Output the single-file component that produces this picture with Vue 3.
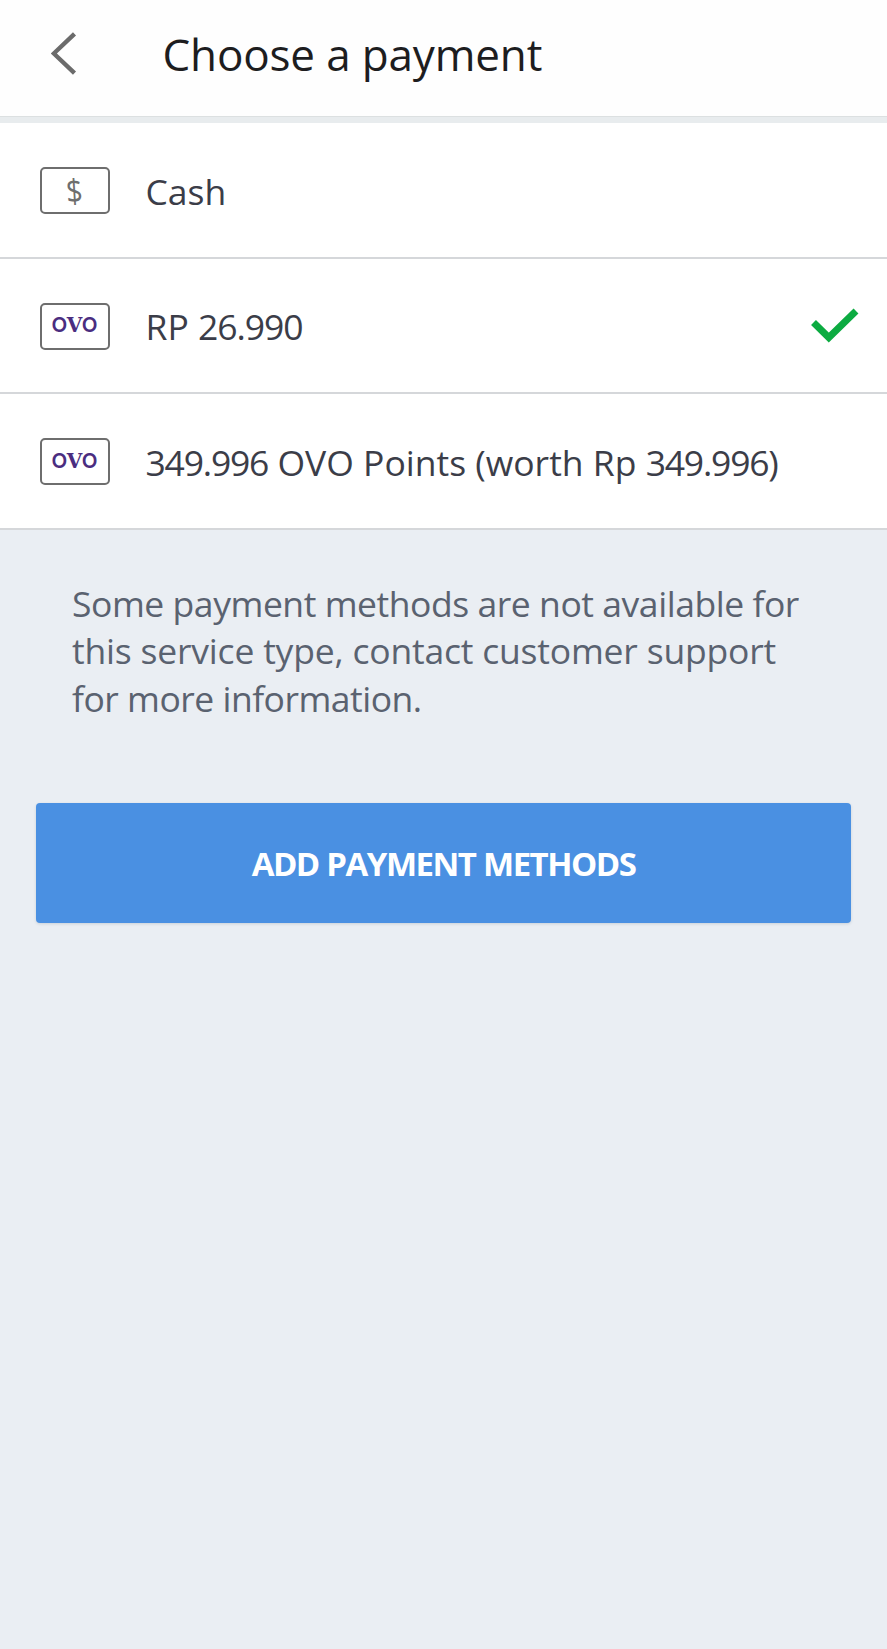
<script setup>
const methods = [
  { id: 'cash', kind: 'cash', parts: [{ text: 'Cash' }], selected: false },
  {
    id: 'balance',
    kind: 'ovo',
    parts: [{ text: 'RP ' }, { text: '26.990', number: true }],
    selected: true,
  },
  {
    id: 'points',
    kind: 'ovo',
    parts: [
      { text: '349.996', number: true },
      { text: ' OVO Points (worth Rp ' },
      { text: '349.996)', number: true },
    ],
    selected: false,
  },
]
const notice = [
  'Some payment methods are not available for',
  'this service type, contact customer support',
  'for more information.',
]
</script>

<template>
  <div class="screen">
    <header class="header">
      <svg class="back" width="26" height="44" viewBox="0 0 26 44" fill="none">
        <path d="M23.5 1.8 2.8 21.5 23.5 41.2" stroke="#6b6b6b" stroke-width="4.4" />
      </svg>
      <h1 class="title">Choose a payment</h1>
    </header>

    <ul class="methods">
      <li v-for="m in methods" :key="m.id" class="method">
        <span class="badge" :class="m.kind">
          <span v-if="m.kind === 'cash'" class="mark">$</span>
          <span v-else class="mark">O<span class="slab">V</span>O</span>
        </span>
        <span class="label" :class="m.id"><span
          v-for="(p, i) in m.parts" :key="i" :class="{ number: p.number }">{{ p.text }}</span></span>
        <svg v-if="m.selected" class="check" width="48" height="36" viewBox="0 0 48 36" fill="none">
          <path d="M2.5 14.5 17.8 29.5 45 3" stroke="#0cab41" stroke-width="7" />
        </svg>
      </li>
    </ul>

    <p class="notice">
      <span v-for="(line, i) in notice" :key="i" class="line" :class="'line-' + i">{{ line }}</span>
    </p>

    <button class="add" type="button">ADD PAYMENT METHODS</button>
  </div>
</template>

<style>
body {
  margin: 0;
  background: #eaeef3;
}
</style>

<style scoped>
.screen {
  min-height: 1649px;
  background: #eaeef3;
  font-family: 'Open Sans', 'Noto Sans', sans-serif;
  overflow: hidden;
}
.header {
  box-sizing: border-box;
  height: 123px;
  display: flex;
  align-items: flex-start;
  padding: 32px 0 0 51px;
  background: #fefefe;
  border-bottom: 6px solid #e8ecee;
  box-shadow: inset 0 -1px 0 #dce0e1;
}
.back {
  flex: none;
}
.title {
  margin: -8px 0 0 85.5px;
  font-size: 44px;
  line-height: 60px;
  font-weight: 400;
  letter-spacing: -0.15px;
  color: #1d1d1f;
  white-space: nowrap;
}
.methods {
  list-style: none;
  margin: 0;
  padding: 0;
  background: #fff;
}
.method {
  box-sizing: border-box;
  height: 135.5px;
  display: flex;
  align-items: center;
  padding: 2px 28px 0 39.5px;
  border-bottom: 2px solid #d5d7da;
}
.badge {
  box-sizing: border-box;
  flex: none;
  width: 70px;
  height: 47px;
  border: 2px solid #6e6e6e;
  border-radius: 5px;
  display: flex;
  align-items: center;
  justify-content: center;
}
.cash .mark {
  font-size: 33px;
  line-height: 40px;
  color: #6e6e6e;
  transform: scaleX(0.88) skewX(4deg);
}
.ovo .mark {
  font-family: Inter, sans-serif;
  font-size: 20.5px;
  font-weight: 600;
  line-height: 36px;
  padding-bottom: 2px;
  color: #4a2d80;
}
.slab {
  font-family: 'DejaVu Serif', serif;
  font-weight: 700;
  font-size: 20px;
  line-height: 1;
  margin: 0 -0.5px;
}
.label {
  margin-left: 36px;
  font-size: 35.5px;
  line-height: 48px;
  color: #3b3d48;
  white-space: pre;
}
.number {
  letter-spacing: -1.05px;
}
.points .number {
  letter-spacing: -1.2px;
}
.check {
  margin-left: auto;
}
.notice {
  margin: 50px 0 0 72px;
  font-size: 35.5px;
  line-height: 47.5px;
  color: #5a6270;
}
.line {
  display: block;
  white-space: nowrap;
}
.line-0 {
  letter-spacing: -0.45px;
}
.line-1 {
  letter-spacing: -0.2px;
}
.line-2 {
  letter-spacing: -0.5px;
}
.add {
  display: flex;
  align-items: center;
  justify-content: center;
  width: 815px;
  height: 120px;
  margin: 81px 0 0 36px;
  padding: 0;
  border: 0;
  border-radius: 4px;
  background: #4a90e2;
  box-shadow: 0 1px 3px rgba(80, 100, 120, 0.2);
  color: #fff;
  font-family: inherit;
  font-size: 33px;
  font-weight: 700;
  letter-spacing: -1.5px;
  word-spacing: 0.5px;
  white-space: nowrap;
}
</style>
